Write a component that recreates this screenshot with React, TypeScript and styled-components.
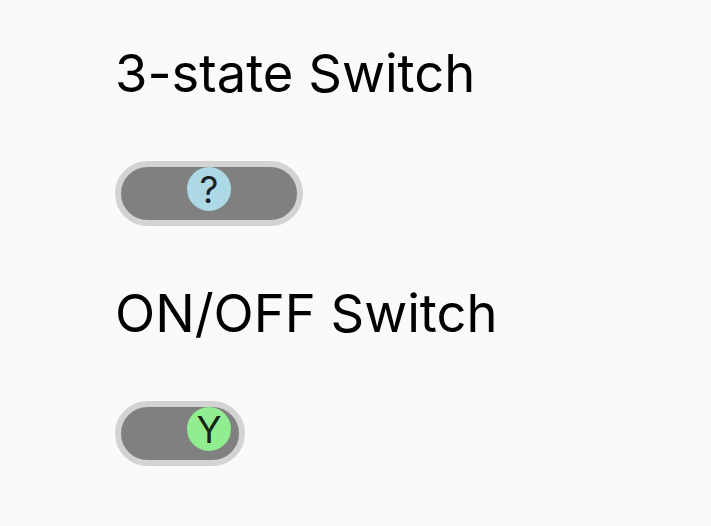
import React, { useState } from "react";
import styled, { createGlobalStyle } from "styled-components";

const Global = createGlobalStyle`
  html, body {
    margin: 0;
    padding: 0;
    background: #fafafa;
    font-family: Inter, "Noto Sans", sans-serif;
    color: #000;
  }
`;

const Page = styled.main`
  display: flex;
  flex-direction: column;
  padding: 42px 0 0 115px;
`;

const Section = styled.section`
  display: flex;
  flex-direction: column;
  align-items: flex-start;
  gap: 56px;
  margin-bottom: 56px;
`;

const Title = styled.h2`
  margin: 0;
  font-size: 52.5px;
  font-weight: 400;
  line-height: 63px;
`;

const Track = styled.button<{ $width: number; $justify: string }>`
  appearance: none;
  display: flex;
  align-items: flex-start;
  justify-content: ${(p) => p.$justify};
  box-sizing: border-box;
  width: ${(p) => p.$width}px;
  height: 65px;
  margin: 0;
  padding: 0 8px 9px 8px;
  border: 6px solid #d3d3d3;
  border-radius: 33px;
  background: #808080;
  cursor: pointer;
`;

const Knob = styled.span<{ $color: string }>`
  display: flex;
  align-items: center;
  justify-content: center;
  width: 44px;
  height: 44px;
  border-radius: 50%;
  background: ${(p) => p.$color};
  font-family: Inter, "Noto Sans", sans-serif;
  font-size: 37px;
  line-height: 1;
  color: rgba(0, 0, 0, 0.85);
`;

type Tri = "no" | "unknown" | "yes";

const triNext: Record<Tri, Tri> = { no: "unknown", unknown: "yes", yes: "no" };
const triJustify: Record<Tri, string> = {
  no: "flex-start",
  unknown: "center",
  yes: "flex-end",
};
const triKnob: Record<Tri, { color: string; label: string }> = {
  no: { color: "#f08080", label: "N" },
  unknown: { color: "#add8e6", label: "?" },
  yes: { color: "#90ee90", label: "Y" },
};

export default function App() {
  const [tri, setTri] = useState<Tri>("unknown");
  const [on, setOn] = useState(true);

  return (
    <>
      <Global />
      <Page>
        <Section>
          <Title>3-state Switch</Title>
          <Track
            $width={188}
            $justify={triJustify[tri]}
            onClick={() => setTri(triNext[tri])}
          >
            <Knob $color={triKnob[tri].color}>{triKnob[tri].label}</Knob>
          </Track>
        </Section>
        <Section>
          <Title>ON/OFF Switch</Title>
          <Track
            $width={130}
            $justify={on ? "flex-end" : "flex-start"}
            onClick={() => setOn(!on)}
          >
            <Knob $color={on ? "#90ee90" : "#f08080"}>{on ? "Y" : "N"}</Knob>
          </Track>
        </Section>
      </Page>
    </>
  );
}
